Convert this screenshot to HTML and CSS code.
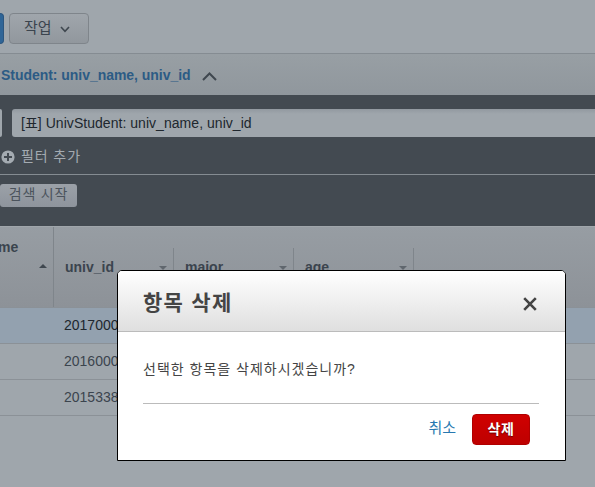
FILE: index.html
```html
<!DOCTYPE html>
<html lang="ko">
<head>
<meta charset="utf-8">
<title>항목 삭제</title>
<link rel="stylesheet" href="styles.css">
</head>
<body>
<main class="page">
  <div class="toolbar">
    <button class="primary" aria-label="생성"></button>
    <button class="action"><span>작업</span>
      <svg width="10" height="7" viewBox="0 0 10 7"><path d="M1 1l4 4.3L9 1"/></svg>
    </button>
  </div>
  <div class="summary">
    <span>Student: univ_name, univ_id</span>
    <svg width="15" height="9" viewBox="0 0 15 9"><path d="M1 8l6.5-6.5L14 8"/></svg>
  </div>
  <section class="filters">
    <div class="fields">
      <div class="field-end"></div>
      <div class="field">[표] UnivStudent: univ_name, univ_id</div>
    </div>
    <div class="add">
      <svg width="14" height="14" viewBox="0 0 14 14"><circle cx="7" cy="7" r="6.6"/><path d="M7 3v8M3 7h8"/></svg>
      <span>필터 추가</span>
    </div>
    <div class="start"><button class="search">검색 시작</button></div>
  </section>
  <div class="grid">
    <div class="row head">
      <div class="th first"><span>me</span><i class="up"></i></div>
      <div class="th"><span>univ_id</span><i class="down"></i></div>
      <div class="th"><span>major</span><i class="down"></i></div>
      <div class="th"><span>age</span><i class="down"></i></div>
    </div>
    <div class="row selected"><div></div><div class="td">2017000</div></div>
    <div class="row"><div></div><div class="td">2016000</div></div>
    <div class="row"><div></div><div class="td">2015338</div></div>
  </div>
</main>
<div class="dialog" role="dialog">
  <header class="title">
    <h1>항목 삭제</h1>
    <svg width="14" height="14" viewBox="0 0 14 14"><path d="M1.2 1.2l11.6 11.6M12.8 1.2L1.2 12.8"/></svg>
  </header>
  <div class="content">
    <p>선택한 항목을 삭제하시겠습니까?</p>
    <footer class="buttons">
      <a class="cancel">취소</a>
      <button class="delete">삭제</button>
    </footer>
  </div>
</div>
</body>
</html>
```
FILE: styles.css
```css
* { box-sizing: border-box; }
body {
  margin: 0;
  width: 595px;
  height: 487px;
  overflow: hidden;
  background: #9fa6ac;
  color: #3b444e;
  font: 14px "Liberation Sans", "Noto Sans CJK KR", sans-serif;
}
button { font: inherit; padding: 0; margin: 0; }
svg { display: block; fill: none; stroke: #3f474f; }
.toolbar {
  display: flex;
  gap: 5px;
  height: 54px;
  padding-top: 13px;
  border-bottom: 1px solid #858c92;
}
.primary {
  width: 4px;
  height: 31px;
  border: 1px solid #2c567f;
  border-left: 0;
  border-radius: 0 4px 4px 0;
  background: #2f6597;
}
.action {
  display: flex;
  align-items: center;
  gap: 8px;
  width: 80px;
  height: 31px;
  padding: 0 0 4px 14px;
  border: 1px solid #7f858b;
  border-radius: 4px;
  background: linear-gradient(#a0a6ac, #91979d);
  color: #3b444e;
  font-size: 15px;
}
.action svg { stroke-width: 1.6; margin-top: 6px; }
.summary {
  display: flex;
  align-items: center;
  gap: 11px;
  height: 41px;
  padding: 0 0 0 1px;
  background: linear-gradient(#989fa4, #90979d);
  color: #2c5b85;
  font-weight: bold;
  letter-spacing: -0.04px;
}
.summary svg { stroke-width: 2; margin-top: 4px; }
.filters {
  height: 131px;
  padding-top: 14px;
  background: #434a51;
}
.fields { display: flex; gap: 10px; height: 28px; }
.field-end { width: 2px; background: #9fa6ac; border-radius: 0 3px 3px 0; }
.field {
  flex: 1;
  padding-left: 9px;
  border-radius: 3px 0 0 3px;
  background: linear-gradient(#9299a0, #9fa6ac 5px);
  color: #20272e;
  letter-spacing: 0.04px;
  line-height: 28px;
  white-space: nowrap;
}
.add {
  display: flex;
  align-items: center;
  gap: 6px;
  height: 37px;
  padding: 0 0 2px 1px;
  color: #a4abb1;
  letter-spacing: 0.9px;
}
.add svg { fill: #a4abb1; stroke: none; margin-top: 4px; }
.add path { stroke: #434a51; stroke-width: 2; }
.start { padding-top: 9px; border-top: 1px solid #858c92; }
.search {
  display: block;
  width: 77px;
  height: 23px;
  padding-bottom: 3px;
  border: 0;
  border-radius: 3px;
  background: linear-gradient(#9ba1a8, #8e949c);
  color: #4b535c;
  letter-spacing: 0.8px;
  line-height: 20px;
}
.row {
  display: grid;
  grid-template-columns: 54px 120px 120px 120px;
  height: 36px;
  border-bottom: 1px solid #8b9197;
}
.head {
  height: 82px;
  background: linear-gradient(#979da3, #8d9298);
  font-weight: bold;
  border-top: 1px solid #a0a6ab;
}
.th {
  display: flex;
  justify-content: space-between;
  height: 40px;
  margin-top: 21px;
  padding: 11px 6px 0 11px;
  border-right: 1px solid #7f858b;
}
.first { height: 80px; margin: 0; padding: 12px 6px 0 0; }
.first span { margin-left: -2px; }
.up, .down {
  width: 0;
  height: 0;
  border: 4px solid transparent;
}
.up { margin-top: 25px; border-top: 0; border-bottom-color: #3f474f; }
.down { margin-top: 7px; border-bottom: 0; border-top-color: #60676e; }
.td { padding-left: 10px; line-height: 35px; }
.selected { background: #93a1af; color: #20272e; }
.dialog {
  position: absolute;
  left: 117px;
  top: 270px;
  width: 449px;
  height: 191px;
  border: 1px solid #000;
  border-radius: 5px 5px 0 0;
  overflow: hidden;
  background: #fff;
  color: #444;
}
.title {
  display: flex;
  justify-content: space-between;
  align-items: center;
  height: 61px;
  padding: 0 28px 0 25px;
  border-bottom: 1px solid #bbb;
  background: linear-gradient(#fff, #dfdfdf);
}
.title h1 { margin: 4px 0 0; font-size: 21px; line-height: 30px; letter-spacing: 1.3px; }
.title svg { stroke: #444; stroke-width: 2.6; margin-top: 6px; }
.content { padding: 25px 26px 0 25px; }
.content p { margin: 0; height: 46px; line-height: 24px; letter-spacing: 1px; }
.buttons {
  display: flex;
  justify-content: flex-end;
  gap: 16px;
  padding: 10px 9px 0 0;
  border-top: 1px solid #bbb;
}
.cancel { color: #2878b0; font-size: 15px; line-height: 27px; }
.delete {
  width: 58px;
  height: 31px;
  padding-bottom: 4px;
  border: 1px solid #b00000;
  border-radius: 4px;
  background: linear-gradient(#d00000, #be0000);
  color: #fff;
  font-weight: bold;
  letter-spacing: 0.7px;
  text-shadow: 0 1px 1px #600;
}
```
